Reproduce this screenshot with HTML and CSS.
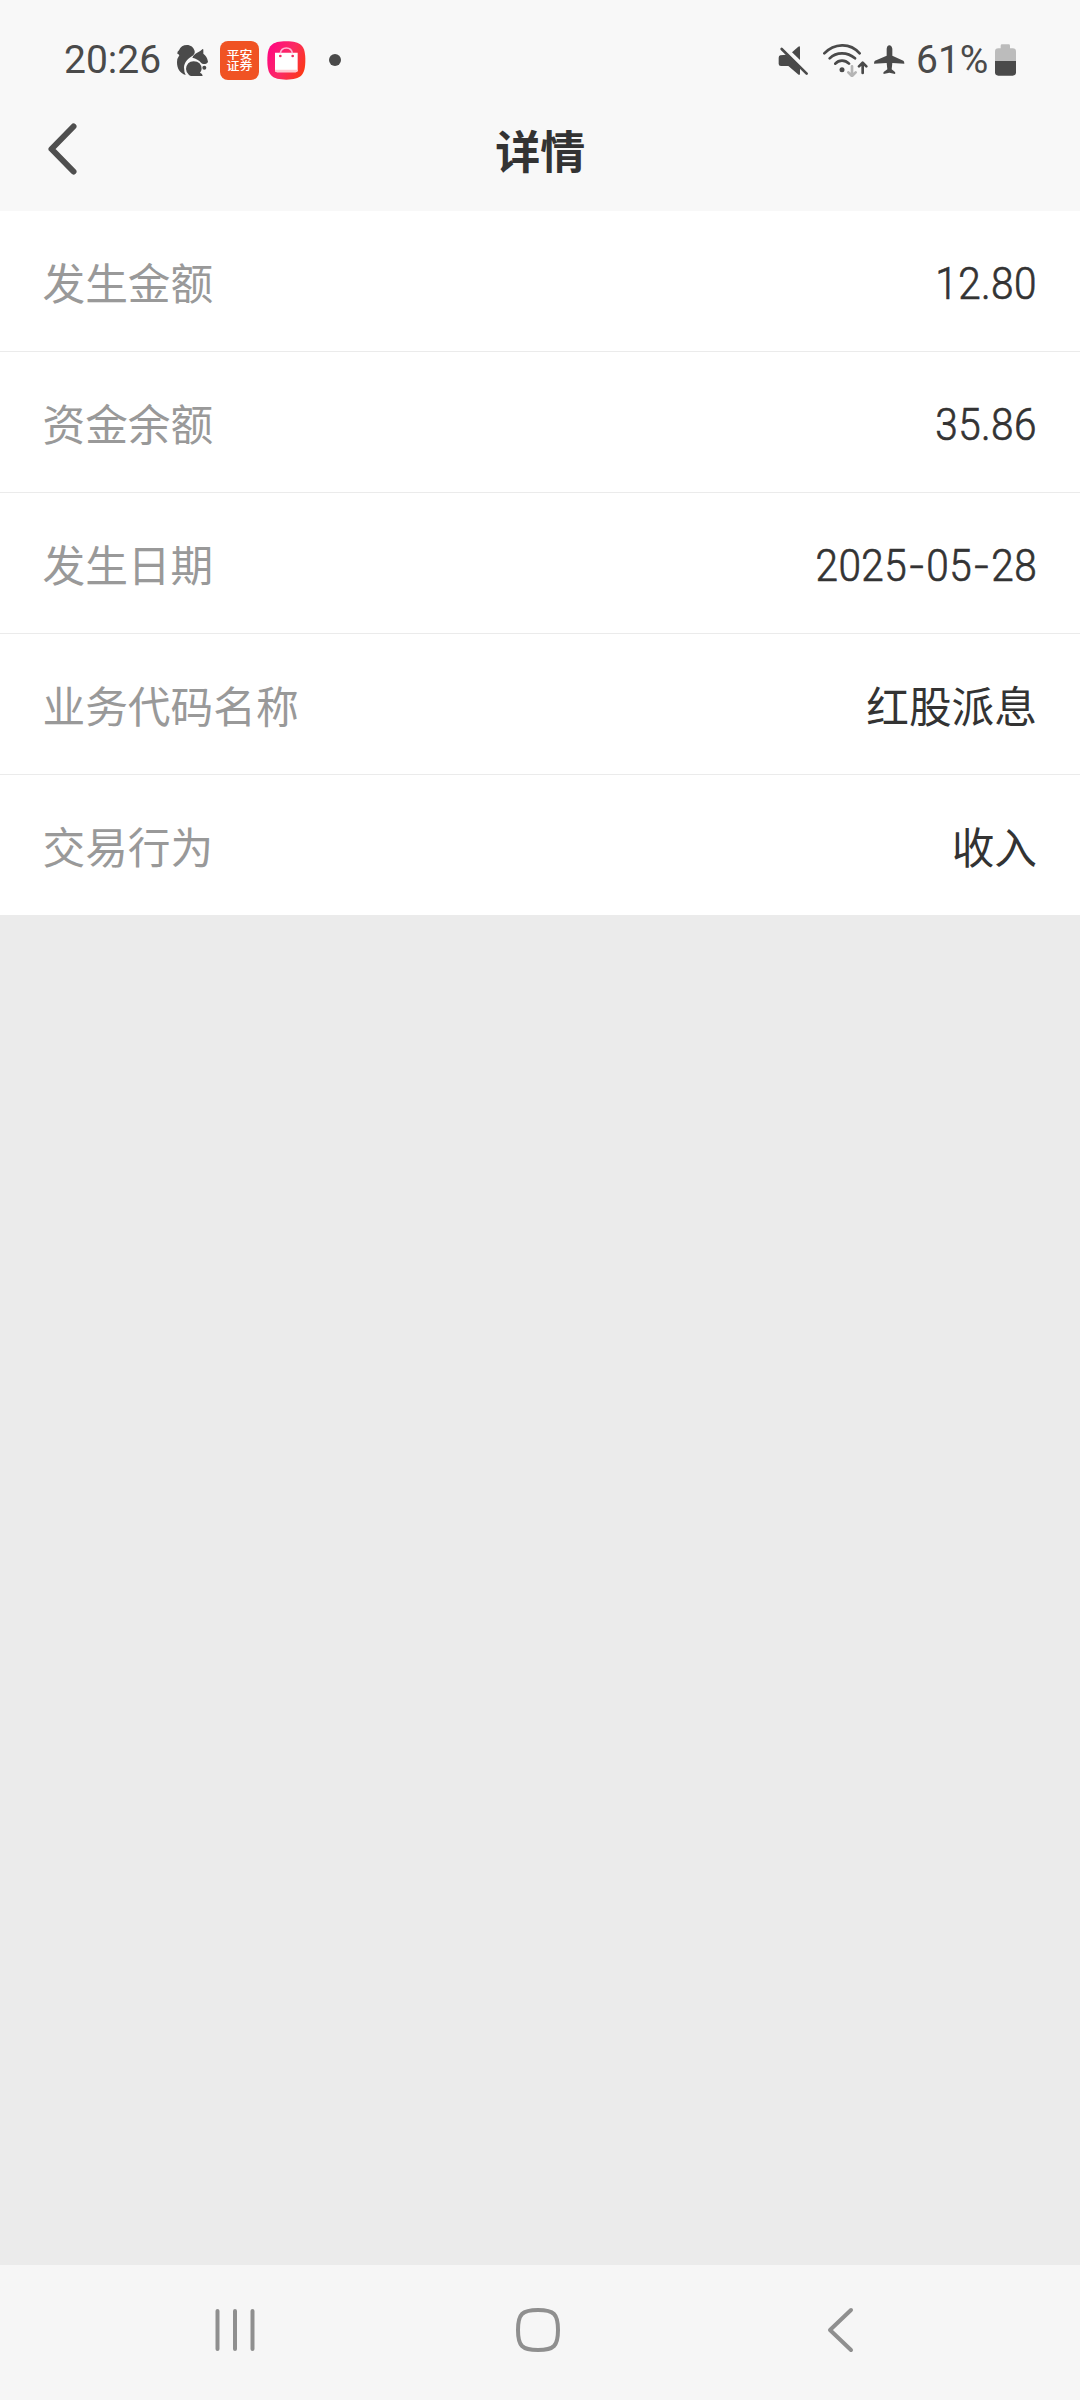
FILE: index.html
```html
<!DOCTYPE html>
<html lang="zh-CN">
<head>
<meta charset="utf-8">
<title>详情</title>
<link rel="stylesheet" href="styles.css">
</head>
<body>
<div class="screen">
  <header class="top">
    <div class="status">
      <div class="status-group">
        <span class="status-text clock">20:26</span>
        <svg class="icon squirrel" viewBox="408 72 96 96" width="32" height="32">
          <path class="ink" d="M412 101Q411 95 417 91C421 80 430 75 441 75C452 75 461 82 464 93Q466 101 460 106C444 115 433 127 432 142Q432 156 437 165C419 160 411 145 411 127Q411 115 418 106Q416 102 412 101Z"/>
          <path class="ink" d="M457 113C464 99 472 101 487 88Q490 86 490 90V101Q501 108 504 125Q502 132 491 132Q486 132 483 128Q474 117 457 113Z"/>
          <path class="ink" d="M447 165Q438 157 438 147Q440 125 461 124Q484 125 485 147Q484 154 480 158Q488 160 488 168H454Q450 168 447 165Z"/>
          <circle class="ink" cx="493" cy="143" r="6"/>
        </svg>
        <span class="app-badge"><span>平安<br>证券</span></span>
        <svg class="icon shop" viewBox="682 62 117 117" width="39" height="39">
          <defs>
            <linearGradient id="shop-fill" x1="0" y1="0.3" x2="1" y2="0.8">
              <stop offset="0" stop-color="#ff0a80"/>
              <stop offset="0.5" stop-color="#fb2b62"/>
              <stop offset="1" stop-color="#fc3a10"/>
            </linearGradient>
          </defs>
          <path fill="url(#shop-fill)" d="M740 63C784 63 797 76 797 120S784 178 740 178S683 165 683 120S696 63 740 63Z"/>
          <path class="bag" d="M706 97H774V150Q774 156 768 156H712Q706 156 706 150Z"/>
          <path class="bag-base" d="M706 148H774V150Q774 156 768 156H712Q706 156 706 150Z"/>
          <path class="bag-handle" d="M722 99Q724 83 740 83T758 99"/>
          <circle class="bag-hole" cx="722" cy="107" r="4"/>
          <circle class="bag-hole" cx="759" cy="107" r="4"/>
        </svg>
        <span class="dot"></span>
      </div>
      <div class="status-group">
        <svg class="icon mute" viewBox="55 72 93 93" width="31" height="31">
          <path class="ink" d="M62 103Q57 104 57 110V129Q57 135 64 135H86L115 160Q121 165 121 157V141L80 101Z"/>
          <path class="ink" d="M97 94L115 78Q121 73 121 80V117Z"/>
          <path class="line" d="M66 84L141 158"/>
        </svg>
        <svg class="icon wifi" viewBox="188 66 135 102" width="45" height="34">
          <path class="line" d="M192 97Q214 74 245 73T298 97M208 112Q223 97 245 97T284 112M225 128Q233 119 245 119T266 128"/>
          <circle class="ink" cx="245" cy="146" r="7.5"/>
          <path class="line faint" d="M275 136V164M264 154L275 165L286 154"/>
          <path class="line" d="M307 156V126M296 136L307 125L318 136"/>
        </svg>
        <svg class="icon plane" viewBox="343 75 93 90" width="31" height="30">
          <path class="ink" d="M381 86Q383 76 389 76T398 86V107L431 122Q434 124 434 131L398 129L396 148L406 156Q408 159 406 162L389 158L372 162Q370 159 372 156L383 148L381 129L343 131Q343 124 346 122L381 107Z"/>
        </svg>
        <span class="status-text battery-level">61%</span>
        <svg class="icon battery" viewBox="705 69 63 96" width="21" height="32">
          <path class="battery-empty" d="M722 82V74Q722 70 726 70H746Q750 70 750 74V82H758Q768 82 768 92V121H705V92Q705 82 715 82Z"/>
          <path class="ink" d="M705 120H768V154Q768 164 758 164H715Q705 164 705 154Z"/>
        </svg>
      </div>
    </div>
    <div class="titlebar">
      <svg class="back" viewBox="0 0 32 54" width="32" height="54">
        <path d="M26.5 4.5L4.5 27L26.5 49.500"/>
      </svg>
      <h1>详情</h1>
    </div>
  </header>

  <main class="details">
    <div class="row"><span class="label">发生金额</span><span class="number">12.80</span></div>
    <div class="row"><span class="label">资金余额</span><span class="number">35.86</span></div>
    <div class="row"><span class="label">发生日期</span><span class="number">2025<i>-</i>05<i>-</i>28</span></div>
    <div class="row"><span class="label">业务代码名称</span><span class="value">红股派息</span></div>
    <div class="row"><span class="label">交易行为</span><span class="value">收入</span></div>
  </main>

  <nav class="navbar">
    <svg viewBox="0 0 60 60" width="60" height="60"><path d="M12.500 11V49M30 11V49M47.500 11V49"/></svg>
    <svg viewBox="0 0 60 60" width="60" height="60"><path d="M30 10C46 10 50 14 50 30S46 50 30 50S10 46 10 30S14 10 30 10Z"/></svg>
    <svg viewBox="0 0 60 60" width="60" height="60"><path d="M41 10L20 30L41 50"/></svg>
  </nav>
</div>
</body>
</html>
```
FILE: styles.css
```css
* {
  box-sizing: border-box;
}

body {
  margin: 0;
  background: #ebebeb;
  font-family: "Noto Sans CJK SC", sans-serif;
}

.screen {
  display: flex;
  flex-direction: column;
  width: 1080px;
  height: 2400px;
}

.top {
  height: 211px;
  background: #f8f8f8;
}

.status {
  display: flex;
  justify-content: space-between;
  height: 120px;
  padding: 0 64px;
}

.status-group {
  display: flex;
  align-items: center;
}

.status-text {
  font: 39px/46px Roboto, sans-serif;
  color: #4a4a4a;
  white-space: nowrap;
}

.clock {
  width: 97px;
}

.ink {
  fill: #4a4a4a;
}

.line {
  fill: none;
  stroke: #4a4a4a;
  stroke-width: 8;
  stroke-linecap: round;
  stroke-linejoin: round;
}

.faint {
  stroke: #b5b5b5;
}

.squirrel {
  margin-left: 15px;
}

.app-badge {
  display: flex;
  align-items: center;
  justify-content: center;
  width: 39px;
  height: 39px;
  margin-left: 12px;
  border-radius: 8px;
  background: #f05323;
  color: #fff;
  font-size: 13px;
  font-weight: 500;
  line-height: 13px;
}

.app-badge span {
  transform: scaleY(0.86);
}

.shop {
  margin-left: 8px;
}

.bag {
  fill: #fff;
}

.bag-base {
  fill: #ffc9cf;
}

.bag-handle {
  fill: none;
  stroke: #ffb5d4;
  stroke-width: 5;
}

.bag-hole {
  fill: #f02a62;
}

.dot {
  width: 12px;
  height: 12px;
  margin-left: 23px;
  border-radius: 50%;
  background: #4a4a4a;
}

.wifi {
  margin-left: 14px;
}

.plane {
  margin-left: 6px;
}

.battery-level {
  width: 72px;
  margin-left: 11px;
}

.battery {
  margin-left: 7px;
}

.battery-empty {
  fill: #bcbcbc;
}

.titlebar {
  display: grid;
  grid-template-columns: 1fr auto 1fr;
  align-items: center;
  height: 60px;
  padding-left: 46.500px;
}

.back {
  margin-top: -3px;
}

.back path {
  fill: none;
  stroke: #4f4f4f;
  stroke-width: 6;
  stroke-linecap: round;
  stroke-linejoin: round;
}

h1 {
  margin: 0 46px 0 0;
  color: #333;
  font-size: 45px;
  font-weight: 700;
  line-height: 60px;
}

.details {
  flex: 1;
}

.row {
  display: flex;
  align-items: center;
  justify-content: space-between;
  height: 141px;
  padding: 0 43px 1px 42.500px;
  border-bottom: 1px solid #ebebeb;
  background: #fff;
  font-size: 42.700px;
  line-height: 64px;
}

.label {
  color: #999;
}

.value,
.number {
  color: #333;
}

.number {
  padding-top: 6px;
  font-family: Roboto, sans-serif;
  font-size: 45px;
  font-weight: 300;
  letter-spacing: 0.450px;
  -webkit-text-stroke: 0.700px #333;
  transform: scaleX(0.9);
  transform-origin: right;
}

.number i {
  display: inline-block;
  padding: 0 4px;
  font-style: normal;
  transform: scaleX(1.25);
}

.navbar {
  display: flex;
  justify-content: space-between;
  align-items: center;
  height: 135px;
  padding: 0 210px 6px 205px;
  background: #f6f6f6;
}

.navbar path {
  fill: none;
  stroke: #8f8f8f;
  stroke-width: 4;
  stroke-linecap: round;
  stroke-linejoin: round;
}
```
